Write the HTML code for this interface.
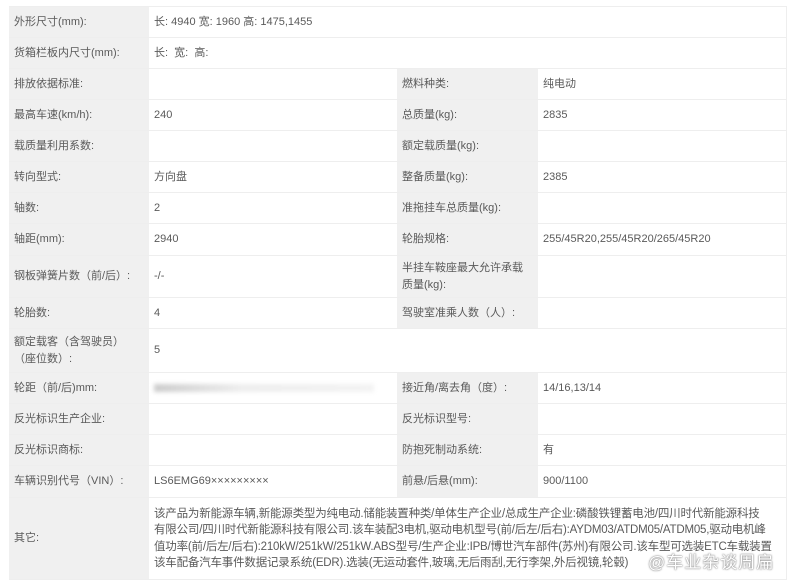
<!DOCTYPE html>
<html><head><meta charset="utf-8"><style>
body{margin:0;background:#fff;width:794px;height:578px;overflow:hidden;font-family:"Liberation Sans","Noto Sans CJK SC",sans-serif;font-size:11px;color:#5a5a5a}
table{position:absolute;left:9px;top:6px;border-collapse:collapse;table-layout:fixed;width:777px;border-right:1px solid #eee;border-top:1px solid #eee}
td{border-bottom:1px solid #eee;padding:0 0 0 5px;vertical-align:middle;line-height:15px;overflow:hidden;white-space:nowrap}
td.l{background:#f0f0f0}
.wm{position:absolute;left:648px;top:548px;font-size:17px;color:#fff;text-shadow:0 0 2px #888,0 0 1px #666;letter-spacing:1px}
.blur{display:inline-block;width:220px;height:8px;background:linear-gradient(90deg,#ccc,#eee 40%,#f3f3f3);filter:blur(2px);vertical-align:middle}
</style></head><body>
<table>
<colgroup><col style="width:140px"><col style="width:248px"><col style="width:141px"><col style="width:248px"></colgroup>
<tr style="height:31px"><td class="l">外形尺寸(mm):</td><td colspan="3">长: 4940 宽: 1960 高: 1475,1455</td></tr>
<tr style="height:31px"><td class="l">货箱栏板内尺寸(mm):</td><td colspan="3">长: &nbsp;宽: &nbsp;高:</td></tr>
<tr style="height:31px"><td class="l">排放依据标准:</td><td></td><td class="l">燃料种类:</td><td>纯电动</td></tr>
<tr style="height:31px"><td class="l">最高车速(km/h):</td><td>240</td><td class="l">总质量(kg):</td><td>2835</td></tr>
<tr style="height:31px"><td class="l">载质量利用系数:</td><td></td><td class="l">额定载质量(kg):</td><td></td></tr>
<tr style="height:31px"><td class="l">转向型式:</td><td>方向盘</td><td class="l">整备质量(kg):</td><td>2385</td></tr>
<tr style="height:31px"><td class="l">轴数:</td><td>2</td><td class="l">准拖挂车总质量(kg):</td><td></td></tr>
<tr style="height:32px"><td class="l">轴距(mm):</td><td>2940</td><td class="l">轮胎规格:</td><td>255/45R20,255/45R20/265/45R20</td></tr>
<tr style="height:42px"><td class="l">钢板弹簧片数（前/后）:</td><td>-/-</td><td class="l" style="line-height:17px">半挂车鞍座最大允许承载<br>质量(kg):</td><td></td></tr>
<tr style="height:31px"><td class="l">轮胎数:</td><td>4</td><td class="l">驾驶室准乘人数（人）:</td><td></td></tr>
<tr style="height:44px"><td class="l" style="line-height:17px">额定载客（含驾驶员）<br>（座位数）:</td><td colspan="3">5</td></tr>
<tr style="height:31px"><td class="l">轮距（前/后)mm:</td><td><span class="blur"></span></td><td class="l">接近角/离去角（度）:</td><td>14/16,13/14</td></tr>
<tr style="height:31px"><td class="l">反光标识生产企业:</td><td></td><td class="l">反光标识型号:</td><td></td></tr>
<tr style="height:31px"><td class="l">反光标识商标:</td><td></td><td class="l">防抱死制动系统:</td><td>有</td></tr>
<tr style="height:32px"><td class="l">车辆识别代号（VIN）:</td><td>LS6EMG69×××××××××</td><td class="l">前悬/后悬(mm):</td><td>900/1100</td></tr>
<tr style="height:82px"><td class="l">其它:</td><td colspan="3" style="line-height:16.5px;font-size:11.5px;letter-spacing:-0.2px">该产品为新能源车辆,新能源类型为纯电动.储能装置种类/单体生产企业/总成生产企业:磷酸铁锂蓄电池/四川时代新能源科技<br>有限公司/四川时代新能源科技有限公司.该车装配3电机,驱动电机型号(前/后左/后右):AYDM03/ATDM05/ATDM05,驱动电机峰<br>值功率(前/后左/后右):210kW/251kW/251kW.ABS型号/生产企业:IPB/博世汽车部件(苏州)有限公司.该车型可选装ETC车载装置<br>该车配备汽车事件数据记录系统(EDR).选装(无运动套件,玻璃,无后雨刮,无行李架,外后视镜,轮毂)</td></tr>
</table>
<div class="wm">@车业杂谈周扁</div>
</body></html>
